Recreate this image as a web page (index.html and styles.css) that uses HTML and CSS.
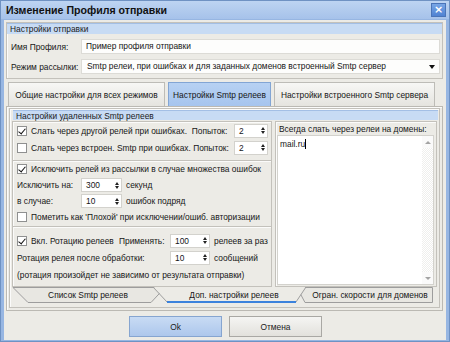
FILE: index.html
```html
<!DOCTYPE html>
<html lang="ru">
<head>
    <meta charset="UTF-8">
    <title>Изменение Профиля отправки</title>
    <link rel="stylesheet" href="styles.css">
</head>
<body>

<div class="window">
    <!-- Title bar -->
    <div class="titlebar">
        <span class="title">Изменение Профиля отправки</span>
        <span class="close-btn">×</span>
    </div>

    <div class="client">
        <!-- Send settings -->
        <div class="group send-group">
            <div class="group-head">Настройки отправки</div>
            <div class="form-row">
                <span class="form-label">Имя Профиля:</span>
                <div class="edit">Пример профиля отправки</div>
            </div>
            <div class="form-row">
                <span class="form-label">Режим рассылки:</span>
                <div class="edit combo">
                    <span>Smtp релеи, при ошибках и для заданных доменов встроенный Smtp сервер</span>
                    <span class="combo-arrow"></span>
                </div>
            </div>
        </div>

        <!-- Top tabs -->
        <div class="tabs">
            <div class="tab tab-common">Общие настройки для всех режимов</div>
            <div class="tab tab-relay active">Настройки Smtp релеев</div>
            <div class="tab tab-server">Настройки встроенного Smtp сервера</div>
        </div>

        <div class="tab-panel">
            <div class="group relay-group">
                <div class="group-head">Настройки удаленных Smtp релеев</div>

                <div class="cols">
                    <div class="left-col">
                        <div class="box box-retry">
                            <div class="row spaced">
                                <label class="check"><span class="cb checked"></span>Слать через другой релей при ошибках.&nbsp; Попыток:</label>
                                <span class="spin spin-small"><span>2</span><span class="arrows"><i class="up"></i><i class="dn"></i></span></span>
                            </div>
                            <div class="row spaced">
                                <label class="check"><span class="cb"></span>Слать через встроен. Smtp при ошибках. Попыток:</label>
                                <span class="spin spin-small"><span>2</span><span class="arrows"><i class="up"></i><i class="dn"></i></span></span>
                            </div>
                        </div>

                        <div class="box box-exclude">
                            <div class="row r16">
                                <label class="check"><span class="cb checked"></span>Исключить релей из рассылки в случае множества ошибок</label>
                            </div>
                            <div class="row r16">
                                <span class="row-label">Исключить на:</span>
                                <span class="spin spin-mid"><span>300</span><span class="arrows"><i class="up"></i><i class="dn"></i></span></span>
                                <span class="unit">секунд</span>
                            </div>
                            <div class="row r16">
                                <span class="row-label">в случае:</span>
                                <span class="spin spin-mid"><span>10</span><span class="arrows"><i class="up"></i><i class="dn"></i></span></span>
                                <span class="unit">ошибок подряд</span>
                            </div>
                            <div class="row r16">
                                <label class="check"><span class="cb"></span>Пометить как 'Плохой' при исключении/ошиб. авторизации</label>
                            </div>
                        </div>

                        <div class="box box-rotate">
                            <div class="row">
                                <label class="check check-rot"><span class="cb checked"></span>Вкл. Ротацию релеев</label>
                                <span class="apply-label">Применять:</span>
                                <span class="spin spin-wide"><span>100</span><span class="arrows"><i class="up"></i><i class="dn"></i></span></span>
                                <span class="unit">релеев за раз</span>
                            </div>
                            <div class="row">
                                <span class="rotate-label">Ротация релея после обработки:</span>
                                <span class="spin spin-wide"><span>10</span><span class="arrows"><i class="up"></i><i class="dn"></i></span></span>
                                <span class="unit">сообщений</span>
                            </div>
                            <div class="row">
                                <span>(ротация произойдет не зависимо от результата отправки)</span>
                            </div>
                        </div>
                    </div>

                    <div class="right-col">
                        <div class="memo-label">Всегда слать через релеи на домены:</div>
                        <div class="memo">
                            <div class="memo-text">mail.ru<span class="caret"></span></div>
                            <div class="scrollbar">
                                <span class="sb-btn"><i class="sb-up"></i></span>
                                <span class="sb-track"></span>
                                <span class="sb-btn"><i class="sb-dn"></i></span>
                            </div>
                        </div>
                    </div>
                </div>

                <!-- Bottom tab set -->
                <div class="tabset">
                    <svg class="tabset-lines" width="426" height="17" viewBox="0 0 426 17">
                        <polygon points="1,0.5 16,15.5 139,15.5 153,0.5" fill="#e8e7e2" stroke="#9d9d9d"/>
                        <polygon points="285,0.5 293,15.5 420.5,15.5 420.5,0.5" fill="#e8e7e2" stroke="#9d9d9d"/>
                        <polygon points="141,-1 155,15 284,15 294,-1" fill="#ecebe6"/>
                        <polyline points="141,0 155,15" fill="none" stroke="#9d9d9d"/>
                        <polyline points="294,0 284,15" fill="none" stroke="#9d9d9d"/>
                        <line x1="155" y1="15" x2="284" y2="15" stroke="#3b82dc" stroke-width="2"/>
                    </svg>
                    <span class="set-tab set-list">Список Smtp релеев</span>
                    <span class="set-tab set-extra">Доп. настройки релеев</span>
                    <span class="set-tab set-speed">Огран. скорости для доменов</span>
                </div>
            </div>
        </div>

        <!-- Dialog buttons -->
        <div class="buttons">
            <button class="btn btn-ok">Ok</button>
            <button class="btn">Отмена</button>
        </div>
    </div>
</div>

</body>
</html>
```

FILE: styles.css
```css
* {
    margin: 0;
    padding: 0;
    box-sizing: border-box;
}

body {
    width: 450px;
    height: 342px;
    overflow: hidden;
    font-family: "Liberation Sans", Arial, sans-serif;
    font-size: 8.4px;
    color: #161616;
    background: #ffffff;
}

/* Window frame */
.window {
    width: 450px;
    height: 342px;
    background: #97b6e2;
    border: 1px solid #6f92c3;
    display: flex;
    flex-direction: column;
}

.titlebar {
    height: 18px;
    background: linear-gradient(#bdd4f2, #a6c2ea);
    display: flex;
    align-items: center;
    justify-content: space-between;
    padding: 0 3px 0 5px;
}

.title {
    font-size: 10.6px;
    font-weight: bold;
    color: #111;
}

.close-btn {
    width: 15px;
    height: 14px;
    background: linear-gradient(#78a6e6, #4f82d2);
    border: 1px solid #4a74b8;
    color: #fff;
    font-family: "DejaVu Sans", sans-serif;
    font-size: 11px;
    font-weight: bold;
    line-height: 12px;
    text-align: center;
}

.client {
    flex: 1;
    margin: 1px 3px 1px 3px;
    background: #ecebe6;
    display: flex;
    flex-direction: column;
}

/* Group boxes */
.group {
    border: 1px solid #c3c1bb;
    box-shadow: inset 1px 1px 0 #fbfbfa;
}

.group-head {
    height: 11px;
    line-height: 11px;
    padding-left: 3px;
    background: #c7dbf4;
    border-top: 1px solid #a3bfe5;
    color: #1c1c1c;
}

.send-group {
    margin: 2px 3px 0 2px;
    height: 57px;
}

.form-row {
    display: flex;
    align-items: center;
    height: 15px;
    margin-top: 5px;
    padding: 0 2px 0 4px;
    white-space: nowrap;
}

.form-label {
    width: 70px;
    flex-shrink: 0;
}

.edit {
    flex: 1;
    height: 15px;
    line-height: 13px;
    padding-left: 4px;
    background: #fdfdfc;
    border: 1px solid #dcdbd6;
    white-space: nowrap;
    overflow: hidden;
}

.combo {
    display: flex;
    justify-content: space-between;
    align-items: center;
    padding-left: 5px;
}

.combo-arrow {
    width: 0;
    height: 0;
    margin-right: 4px;
    border-left: 3.5px solid transparent;
    border-right: 3.5px solid transparent;
    border-top: 4px solid #111;
}

/* Top tabs */
.tabs {
    display: flex;
    gap: 3px;
    height: 24px;
    margin: 3px 0 0 4px;
}

.tab {
    display: flex;
    align-items: center;
    justify-content: center;
    white-space: nowrap;
    border: 1px solid #bdbcb7;
    border-bottom: none;
    background: linear-gradient(#f7f7f5, #e5e4df);
}

.tab-common { width: 157px; }
.tab-relay { width: 103px; }
.tab-server { width: 161px; }

.tab.active {
    background: linear-gradient(#b7d1f3, #a6c5ee);
    border-color: #82a5d4;
}

.tab-panel {
    height: 205px;
    margin: 0 3px 0 2px;
    padding: 1px 2px 2px 2px;
    border: 1px solid #bbb9b3;
    box-shadow: inset 1px 1px 0 #fbfbfa;
}

.relay-group {
    height: 200px;
    display: flex;
    flex-direction: column;
}

.relay-group .group-head {
    height: 10px;
    line-height: 10px;
    margin: 1px 1px 0 3px;
}

.cols {
    display: flex;
    gap: 3px;
    height: 166px;
    margin: 1px 2px 0 2px;
}

/* Left column */
.left-col {
    width: 260px;
    display: flex;
    flex-direction: column;
}

.box {
    border: 1px solid #c3c1bb;
    box-shadow: 1px 1px 0 #fbfbfa inset;
    padding: 0 3px 0 4px;
}

.box-retry {
    height: 40px;
}

.box-exclude {
    height: 66px;
    border-top: none;
}

.box-rotate {
    height: 60px;
    border-top: none;
    padding-top: 4px;
}

.box-rotate .row:first-child {
    margin-top: 1px;
}

.row {
    display: flex;
    align-items: center;
    height: 17px;
    white-space: nowrap;
}

.row.r16 {
    height: 16px;
}

.row.spaced {
    justify-content: space-between;
}

.check {
    display: flex;
    align-items: center;
}

.check-rot {
    width: 102px;
}

.cb {
    width: 10px;
    height: 10px;
    margin-right: 4px;
    background: #ffffff;
    border: 1px solid #8f9090;
    position: relative;
}

.cb.checked::after {
    content: "";
    position: absolute;
    left: 2px;
    top: 0px;
    width: 3px;
    height: 6px;
    border-right: 1.5px solid #111;
    border-bottom: 1.5px solid #111;
    transform: rotate(40deg);
}

.row-label {
    width: 64px;
}

.apply-label {
    width: 51px;
}

.rotate-label {
    width: 153px;
}

.unit {
    margin-left: 4px;
}

/* Spin edits */
.spin {
    display: flex;
    align-items: center;
    justify-content: space-between;
    height: 14px;
    padding: 0 2px 0 4px;
    background: #ffffff;
    border: 1px solid #d3d2cd;
}

.spin-small { width: 34px; }
.spin-mid { width: 41px; }
.spin-wide { width: 40px; }

.arrows {
    display: flex;
    flex-direction: column;
    gap: 1px;
}

.arrows i {
    display: block;
    width: 0;
    height: 0;
    border-left: 2.5px solid transparent;
    border-right: 2.5px solid transparent;
}

.arrows .up { border-bottom: 3px solid #222; }
.arrows .dn { border-top: 3px solid #222; }

/* Right column */
.right-col {
    width: 162px;
    border: 1px solid #c3c1bb;
    box-shadow: 1px 1px 0 #fbfbfa inset;
    padding: 1px 2px 1px 1px;
    display: flex;
    flex-direction: column;
}

.memo-label {
    height: 10px;
    line-height: 10px;
    margin: 1px 0 0 2px;
    white-space: nowrap;
}

.memo {
    flex: 1;
    margin-top: 1px;
    display: flex;
    background: #ffffff;
    border: 1px solid #d3d2cd;
}

.memo-text {
    flex: 1;
    padding: 3px 0 0 2px;
    line-height: 10px;
}

.caret {
    display: inline-block;
    width: 1px;
    height: 10px;
    background: #000;
    vertical-align: top;
}

.scrollbar {
    width: 11px;
    display: flex;
    flex-direction: column;
}

.sb-btn {
    height: 12px;
    display: flex;
    align-items: center;
    justify-content: center;
    background: #fafafa;
}

.sb-btn i {
    width: 0;
    height: 0;
    border-left: 3px solid transparent;
    border-right: 3px solid transparent;
}

.sb-up { border-bottom: 3px solid #a3a3a3; }
.sb-dn { border-top: 3px solid #a3a3a3; }

.sb-track {
    flex: 1;
    background: repeating-conic-gradient(#efefed 0 25%, #ffffff 0 50%) 0 0 / 2px 2px;
}

/* Bottom tab set */
.tabset {
    position: relative;
    height: 17px;
    margin: 0 2px 0 2px;
    display: flex;
}

.tabset-lines {
    position: absolute;
    left: 0;
    top: 0;
}

.set-tab {
    position: relative;
    display: flex;
    align-items: center;
    justify-content: center;
    height: 16px;
    white-space: nowrap;
}

.set-list { width: 152px; }
.set-extra { width: 140px; }
.set-speed { width: 132px; }

/* Dialog buttons */
.buttons {
    display: flex;
    justify-content: center;
    gap: 7px;
    margin-top: 5px;
    padding-left: 1px;
}

.btn {
    width: 93px;
    height: 21px;
    font-family: inherit;
    font-size: 8.4px;
    color: #1c1c1c;
    background: linear-gradient(#f5f5f3, #e2e1dc);
    border: 1px solid #a9a8a4;
}

.btn-ok {
    background: linear-gradient(#c8dbf4, #adc7ec);
    border-color: #86a5d0;
}
```
